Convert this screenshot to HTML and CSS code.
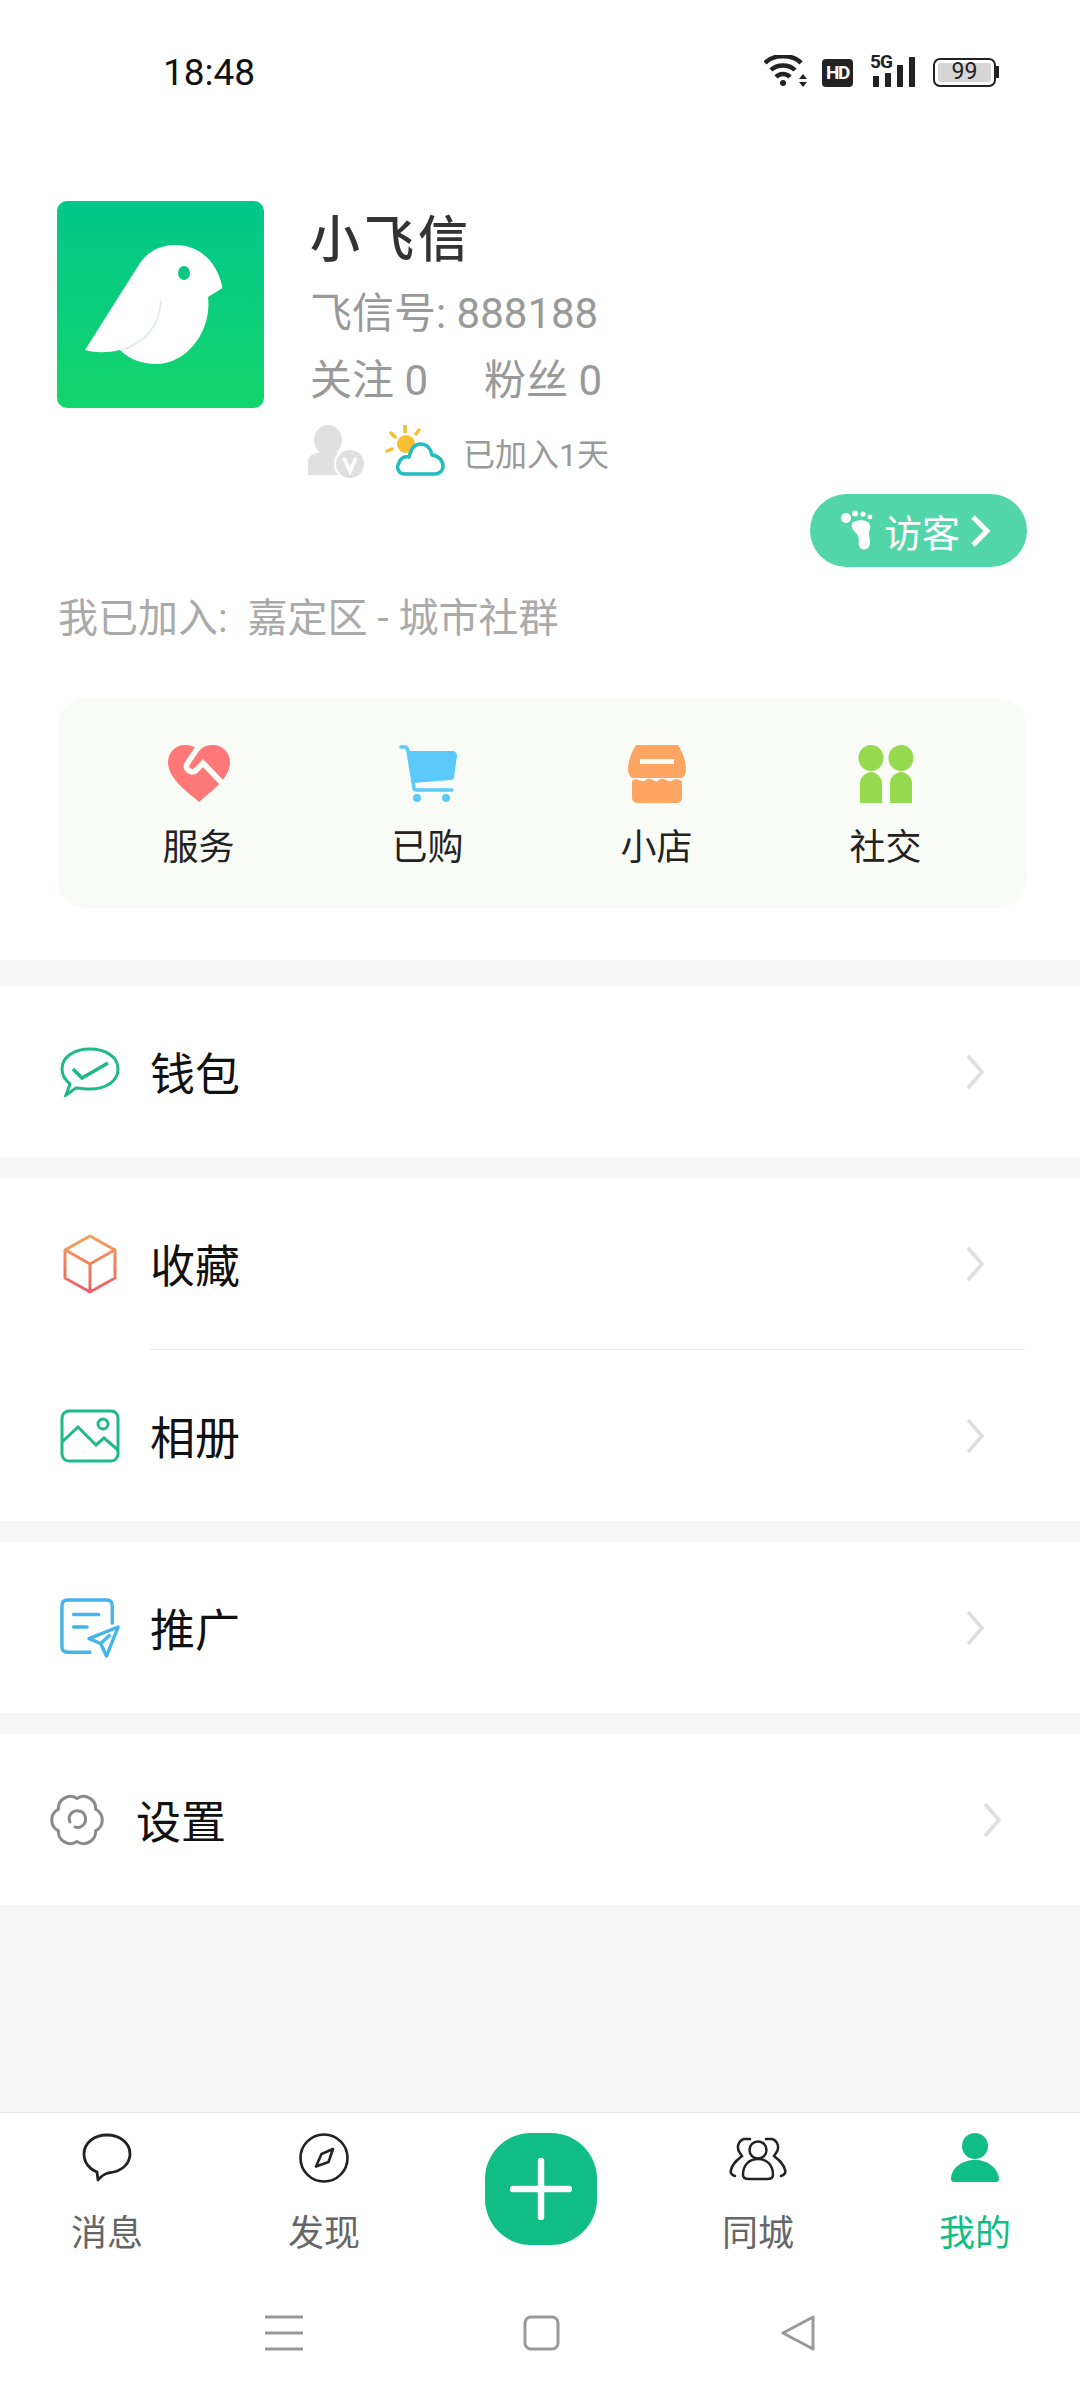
FILE: index.html
```html
<!DOCTYPE html>
<html lang="zh-CN">
<head>
  <meta charset="UTF-8">
  <title>我的</title>
  <link rel="stylesheet" href="styles.css">
</head>
<body>
  <div class="phone">

    <div class="statusbar">
      <span class="time">18:48</span>
      <div class="status-icons">
        <svg width="44" height="32" viewBox="0 0 44 32">
          <path d="M1 8 C9 -1 29 -1 37 8" class="wifi-arc"/>
          <path d="M7 15 C13 9 25 9 31 15" class="wifi-arc"/>
          <path d="M12 22 C16 18 22 18 26 22" class="wifi-arc"/>
          <circle cx="19" cy="28" r="3" fill="#222"/>
          <path d="M35 24 L39 19 L43 24 Z M35 27 L43 27 L39 32 Z" fill="#222"/>
        </svg>
        <span class="hd">HD</span>
        <div class="signal">
          <span class="fiveg">5G</span>
          <svg width="46" height="30" viewBox="0 0 46 30">
            <rect x="3" y="19" width="6" height="11" fill="#222"/>
            <rect x="15" y="16" width="6" height="14" fill="#222"/>
            <rect x="27" y="8" width="6" height="22" fill="#222"/>
            <rect x="39" y="0" width="6" height="30" fill="#222"/>
          </svg>
        </div>
        <div class="battery">
          <span class="battery-level">99</span>
        </div>
        <span class="battery-tip"></span>
      </div>
    </div>

    <div class="profile">
      <div class="avatar">
        <svg width="207" height="207" viewBox="0 0 207 207">
          <path d="M28 149 L83 62 C92 49 105 44 119 44 C143 44 161 62 165.5 87 L151 96 C155 130 130 163 99 163 C85 163 72 158 63 149 C50 152 38 152 28 149 Z" fill="#fff"/>
          <path d="M104 100 C102 125 88 142 64 149" fill="none" stroke="#e4ebe8" stroke-width="2"/>
          <ellipse cx="127" cy="72" rx="6" ry="7" fill="#0cc781"/>
        </svg>
      </div>
      <div class="info">
        <div class="name">小飞信</div>
        <div class="account">飞信号: 888188</div>
        <div class="stats"><span class="stat">关注 0</span><span>粉丝 0</span></div>
        <div class="badges">
          <svg width="58" height="54" viewBox="0 0 58 54">
            <ellipse cx="21" cy="15" rx="14" ry="15" fill="#e0e0e0"/>
            <path d="M1 50 L1 36 C1 30 8 28 14 27 L28 27 C34 28 40 30 40 36 L40 50 Z" fill="#e0e0e0"/>
            <circle cx="43" cy="39" r="15" fill="#e0e0e0" stroke="#fff" stroke-width="2"/>
            <path d="M37 33 L43 46 L49 33" fill="none" stroke="#fff" stroke-width="3.5"/>
          </svg>
          <svg class="weather" width="60" height="54" viewBox="0 0 60 54">
            <circle cx="21" cy="19" r="9" fill="#f9bd33"/>
            <path d="M20 1 L20 7 M34 5 L31 9 M6 8 L10 12 M2 26 L7 24" stroke="#f9bd33" stroke-width="3.5" stroke-linecap="round"/>
            <path d="M20 49 C13 49 11 42 14 38 C15 33 20 31 24 32 C26 24 30 19 35 19 C42 19 46 24 47 30 C54 31 58 36 58 41 C58 46 54 49 50 49 Z" fill="#fff" stroke="#1fbcc0" stroke-width="3.5" stroke-linejoin="round"/>
          </svg>
          <span class="joined-days">已加入1天</span>
        </div>
      </div>
    </div>

    <div class="visitor-wrap">
      <div class="visitor">
        <svg width="38" height="42" viewBox="0 0 38 42">
          <circle cx="6" cy="8" r="5" fill="#fff"/>
          <circle cx="15" cy="3.5" r="3" fill="#fff"/>
          <circle cx="23" cy="4" r="2.6" fill="#fff"/>
          <circle cx="30" cy="7" r="2.4" fill="#fff"/>
          <path d="M13 12 C22 8 32 11 30 19 C28 24 30 28 30 33 C30 40 21 42 19 36 C18 31 20 28 17 24 C14 21 9 16 13 12 Z" fill="#fff"/>
        </svg>
        <span class="visitor-text">访客</span>
        <svg width="22" height="34" viewBox="0 0 22 34">
          <path d="M4 3 L18 17 L4 31" fill="none" stroke="#fff" stroke-width="5"/>
        </svg>
      </div>
    </div>

    <div class="community">我已加入:&nbsp;&nbsp;嘉定区 - 城市社群</div>

    <div class="shortcuts">
      <div class="shortcut">
        <svg width="62" height="58" viewBox="0 0 62 58">
          <path d="M31 57 C20 47 0 34 0 17 C0 7 8 0 17 0 C23 0 28 2 31 6 C34 2 39 0 45 0 C54 0 62 7 62 17 C62 34 42 47 31 57 Z" fill="#ff7878"/>
          <path d="M31 1 L19 19 C17 23 20 26 24 27 C27 27 29 25 35 18 L55 39" fill="none" stroke="#fbfcf6" stroke-width="5.5"/>
        </svg>
        <span class="shortcut-label">服务</span>
      </div>
      <div class="shortcut">
        <svg width="58" height="58" viewBox="0 0 58 58">
          <path d="M8 6 L53 6 C56 6 58 8 58 11 L55 32 C55 34 54 35 52 35 L14 38 Z" fill="#5cc9fb"/>
          <path d="M2 2 L6 2 C8 2 8 3 9 6 L15 43 C15 45 16 45 18 45 L53 45" fill="none" stroke="#5cc9fb" stroke-width="3.5" stroke-linecap="round"/>
          <circle cx="18" cy="53" r="4" fill="#5cc9fb"/>
          <circle cx="47" cy="53" r="4" fill="#5cc9fb"/>
        </svg>
        <span class="shortcut-label">已购</span>
      </div>
      <div class="shortcut">
        <svg width="58" height="58" viewBox="0 0 58 58">
          <path d="M8 0 L50 0 C54 6 58 16 58 24 C58 28 56 32 54 33 L4 33 C2 32 0 28 0 24 C0 16 4 6 8 0 Z" fill="#ffa564"/>
          <path d="M4 36 C9 31 13 39 18 35 C23 31 26 39 31 35 C36 31 40 39 45 35 C49 32 52 36 54 36 L54 52 C54 56 52 58 48 58 L10 58 C6 58 4 56 4 52 Z" fill="#ffa564"/>
          <rect x="12" y="14" width="34" height="5" fill="#fbfcf4"/>
        </svg>
        <span class="shortcut-label">小店</span>
      </div>
      <div class="shortcut">
        <svg width="56" height="58" viewBox="0 0 56 58">
          <ellipse cx="13" cy="13" rx="12.5" ry="13" fill="#95d94f"/>
          <ellipse cx="43" cy="13" rx="12.5" ry="13" fill="#95d94f"/>
          <path d="M2 58 L2 38 C2 32 8 27 13 27 C18 27 24 32 24 38 L24 58 Z" fill="#95d94f"/>
          <path d="M32 58 L32 38 C32 32 38 27 43 27 C48 27 54 32 54 38 L54 58 Z" fill="#95d94f"/>
        </svg>
        <span class="shortcut-label">社交</span>
      </div>
    </div>

    <div class="menu-group menu-first">
      <div class="row">
        <svg class="row-icon" width="60" height="50" viewBox="0 0 60 50">
          <path d="M6 48 L10 37 C4 32 2 27 2 22 C2 10 14 2 30 2 C46 2 58 10 58 22 C58 34 46 42 30 42 C24 42 20 41 16 41 Z" fill="none" stroke="#1fb889" stroke-width="3"/>
          <path d="M13 22 L22 31 L48 16" fill="none" stroke="#1fb889" stroke-width="3.5"/>
        </svg>
        <span class="row-title">钱包</span>
        <svg class="chevron" width="20" height="36" viewBox="0 0 20 36">
          <path d="M3 2 L17 18 L3 34" fill="none" stroke="#dedede" stroke-width="3.5"/>
        </svg>
      </div>
    </div>

    <div class="menu-group">
      <div class="row">
        <svg class="row-icon" width="60" height="60" viewBox="0 0 60 60">
          <defs>
            <linearGradient id="boxGrad" x1="0" y1="0" x2="0" y2="1">
              <stop offset="0" stop-color="#f0a254"/>
              <stop offset="1" stop-color="#ee5f6c"/>
            </linearGradient>
          </defs>
          <path d="M30 2 L55 16 L55 44 L30 58 L5 44 L5 16 Z M5.5 16 L30 30 L54.5 16 M30 30 L30 58" fill="none" stroke="url(#boxGrad)" stroke-width="3" stroke-linejoin="round"/>
        </svg>
        <span class="row-title">收藏</span>
        <svg class="chevron" width="20" height="36" viewBox="0 0 20 36">
          <path d="M3 2 L17 18 L3 34" fill="none" stroke="#dedede" stroke-width="3.5"/>
        </svg>
      </div>
      <div class="divider"></div>
      <div class="row">
        <svg class="row-icon" width="60" height="54" viewBox="0 0 60 54">
          <rect x="2" y="2" width="56" height="50" rx="7" fill="none" stroke="#1fb889" stroke-width="3"/>
          <path d="M2 33 L18 18 L36 36 L44 29 L58 41" fill="none" stroke="#1fb889" stroke-width="3"/>
          <circle cx="43" cy="15" r="5" fill="none" stroke="#1fb889" stroke-width="3"/>
        </svg>
        <span class="row-title">相册</span>
        <svg class="chevron" width="20" height="36" viewBox="0 0 20 36">
          <path d="M3 2 L17 18 L3 34" fill="none" stroke="#dedede" stroke-width="3.5"/>
        </svg>
      </div>
    </div>

    <div class="menu-group">
      <div class="row">
        <svg class="row-icon" width="60" height="62" viewBox="0 0 62 62">
          <path d="M31 56 L8 56 C4 56 2 54 2 50 L2 8 C2 4 4 2 8 2 L48 2 C52 2 54 4 54 8 L54 26" fill="none" stroke="#45b4ea" stroke-width="3.5" stroke-linecap="round"/>
          <path d="M14 17 L40 17 M14 30 L28 30" stroke="#45b4ea" stroke-width="3.5" stroke-linecap="round"/>
          <path d="M60 30 L30 42 L42 47 L48 60 Z M42 47 L52 38" fill="none" stroke="#45b4ea" stroke-width="3.5" stroke-linejoin="round"/>
        </svg>
        <span class="row-title">推广</span>
        <svg class="chevron" width="20" height="36" viewBox="0 0 20 36">
          <path d="M3 2 L17 18 L3 34" fill="none" stroke="#dedede" stroke-width="3.5"/>
        </svg>
      </div>
    </div>

    <div class="menu-group">
      <div class="row row-settings">
        <svg class="row-icon" width="54" height="54" viewBox="0 0 54 54">
          <path d="M27 5.5 A12 12 0 0 1 45.6 16.25 A12 12 0 0 1 45.6 37.75 A12 12 0 0 1 27 48.5 A12 12 0 0 1 8.4 37.75 A12 12 0 0 1 8.4 16.25 A12 12 0 0 1 27 5.5 Z" fill="none" stroke="#8a8a8a" stroke-width="3" stroke-linejoin="round"/>
          <path d="M20 29 C17 22 23 17 29 18 C36 19 38 29 32 33 C29 35 27 35 25 34" fill="none" stroke="#8a8a8a" stroke-width="3" stroke-linecap="round"/>
        </svg>
        <span class="row-title">设置</span>
        <svg class="chevron" width="20" height="36" viewBox="0 0 20 36">
          <path d="M3 2 L17 18 L3 34" fill="none" stroke="#dedede" stroke-width="3.5"/>
        </svg>
      </div>
    </div>

    <div class="spacer"></div>

    <div class="tabbar">
      <div class="tab">
        <svg width="50" height="50" viewBox="0 0 50 50">
          <path d="M15 39 C7 36 2 29 2 21 C2 10 12 2 25 2 C38 2 48 10 48 21 C48 32 38 39 26 40 C23 41 20 42 16 47 Z" fill="none" stroke="#222" stroke-width="2.8" stroke-linejoin="round"/>
        </svg>
        <span class="tab-label">消息</span>
      </div>
      <div class="tab">
        <svg width="50" height="50" viewBox="0 0 50 50">
          <circle cx="25" cy="25" r="23.5" fill="none" stroke="#222" stroke-width="2.6"/>
          <path d="M34 16 L22.5 21 L17 33.5 L29.5 29 Z" fill="none" stroke="#222" stroke-width="2.6" stroke-linejoin="round"/>
        </svg>
        <span class="tab-label">发现</span>
      </div>
      <div class="tab">
        <div class="fab">
          <svg width="62" height="62" viewBox="0 0 62 62">
            <path d="M31 3 L31 59 M3 31 L59 31" stroke="#fff" stroke-width="6.5" stroke-linecap="round"/>
          </svg>
        </div>
      </div>
      <div class="tab">
        <svg width="58" height="50" viewBox="0 0 58 50">
          <circle cx="29" cy="17" r="8.5" fill="none" stroke="#222" stroke-width="2.5"/>
          <path d="M14 42 C14 32 20 26 29 26 C38 26 44 32 44 42 C44 45 42 46 38 46 L20 46 C16 46 14 45 14 42 Z" fill="none" stroke="#222" stroke-width="2.5"/>
          <path d="M21 6 L15 6 C9 8 7 15 11 20 L13 23 C8 27 3 31 2 37 C1 40 3 42 6 43" fill="none" stroke="#222" stroke-width="2.5" stroke-linecap="round"/>
          <path d="M37 6 L43 6 C49 8 51 15 47 20 L45 23 C50 27 55 31 56 37 C57 40 55 42 52 43" fill="none" stroke="#222" stroke-width="2.5" stroke-linecap="round"/>
        </svg>
        <span class="tab-label">同城</span>
      </div>
      <div class="tab">
        <svg width="50" height="50" viewBox="0 0 50 50">
          <circle cx="25" cy="13" r="13" fill="#10bd84"/>
          <path d="M1 46 C1 35 12 27 25 27 C38 27 48 35 49 46 C49 48 48 49 46 49 L4 49 C2 49 1 48 1 46 Z" fill="#10bd84"/>
        </svg>
        <span class="tab-label tab-active">我的</span>
      </div>
    </div>

    <div class="navbar">
      <svg width="38" height="36" viewBox="0 0 38 36">
        <path d="M0 2 L38 2 M0 18 L38 18 M0 34 L38 34" stroke="#999" stroke-width="3"/>
      </svg>
      <svg width="37" height="36" viewBox="0 0 37 36">
        <rect x="2" y="2" width="33" height="32" rx="6" fill="none" stroke="#999" stroke-width="3"/>
      </svg>
      <svg width="36" height="36" viewBox="0 0 36 36">
        <path d="M33 2 L33 34 L3 18 Z" fill="none" stroke="#999" stroke-width="3" stroke-linejoin="round"/>
      </svg>
    </div>

  </div>
</body>
</html>
```

FILE: styles.css
```css
* {
  box-sizing: border-box;
}

html, body {
  margin: 0;
  padding: 0;
}

body {
  font-family: Roboto, "Noto Sans CJK SC", sans-serif;
  background-color: #fff;
}

svg {
  display: block;
  flex-shrink: 0;
}

.phone {
  width: 1080px;
  height: 2400px;
  display: flex;
  flex-direction: column;
  overflow: hidden;
}

/* status bar */
.statusbar {
  height: 144px;
  padding: 52px 81px 0 163px;
  display: flex;
  justify-content: space-between;
  align-items: flex-start;
}

.time {
  font-size: 37px;
  line-height: 42px;
  color: #111;
}

.status-icons {
  height: 35px;
  display: flex;
  align-items: flex-end;
}

.wifi-arc {
  fill: none;
  stroke: #222;
  stroke-width: 4.5;
}

.hd {
  width: 31px;
  height: 28px;
  margin-left: 14px;
  background-color: #222;
  border-radius: 4px;
  color: #fff;
  font-size: 19px;
  font-weight: 700;
  line-height: 28px;
  text-align: center;
  letter-spacing: -1.5px;
}

.signal {
  position: relative;
  width: 46px;
  height: 32px;
  margin-left: 17px;
  display: flex;
  align-items: flex-end;
}

.fiveg {
  position: absolute;
  left: 0;
  top: -2px;
  font-size: 19px;
  font-weight: 700;
  line-height: 18px;
  color: #222;
  letter-spacing: -1px;
}

.battery {
  width: 63px;
  height: 29px;
  margin-left: 17px;
  padding: 3px;
  border: 2.5px solid #222;
  border-radius: 7px;
  display: flex;
}

.battery-level {
  flex: 1;
  background-color: #d6d6d6;
  border-radius: 2px;
  font-size: 23px;
  line-height: 18px;
  text-align: center;
  color: #222;
}

.battery-tip {
  width: 3px;
  height: 12px;
  margin: 0 0 9px 0;
  background-color: #222;
}

/* profile */
.profile {
  padding: 57px 0 0 57px;
  display: flex;
  gap: 46px;
}

.avatar {
  width: 207px;
  height: 207px;
  border-radius: 10px;
  background: linear-gradient(180deg, #02c78a, #13d56d);
}

.info {
  display: flex;
  flex-direction: column;
}

.name {
  height: 76px;
  font-size: 50px;
  font-weight: 500;
  line-height: 78px;
  color: #333;
  letter-spacing: 4px;
}

.account {
  height: 72px;
  font-size: 42px;
  line-height: 74px;
  color: #999;
}

.stats {
  height: 64px;
  font-size: 42px;
  line-height: 64px;
  color: #999;
}

.stat {
  margin-right: 56px;
}

.badges {
  height: 78px;
  display: flex;
  align-items: center;
  margin-left: -3px;
}

.weather {
  margin-left: 20px;
}

.joined-days {
  margin-left: 18px;
  font-size: 32px;
  color: #999;
}

/* visitor pill */
.visitor-wrap {
  margin-top: 3px;
  padding-right: 53px;
  display: flex;
  justify-content: flex-end;
}

.visitor {
  width: 217px;
  height: 73px;
  padding-left: 30px;
  display: flex;
  align-items: center;
  background-color: #52d6a9;
  border-radius: 37px;
}

.visitor-text {
  margin: 0 9px 0 6px;
  font-size: 38px;
  color: #fff;
}

.community {
  margin: 22px 0 0 58px;
  font-size: 40px;
  line-height: 60px;
  color: #aaa;
}

/* shortcut card */
.shortcuts {
  width: 970px;
  height: 210px;
  margin: 49px 0 52px 57px;
  padding: 47px 27px 0;
  display: grid;
  grid-template-columns: repeat(4, 1fr);
  background-color: #f9fcf6;
  border-radius: 30px;
}

.shortcut {
  display: flex;
  flex-direction: column;
  align-items: center;
}

.shortcut-label {
  margin-top: 20px;
  font-size: 36px;
  line-height: 50px;
  color: #222;
}

/* menu */
.menu-group {
  border-top: 21px solid #f6f6f6;
}

.menu-first {
  border-top-width: 26px;
}

.row {
  height: 171px;
  padding: 0 95px 0 60px;
  display: flex;
  align-items: center;
}

.row-icon {
  margin-right: 30px;
}

.row-title {
  flex: 1;
  font-size: 45px;
  color: #111;
}

.row-settings {
  padding: 0 78px 0 50px;
}

.row-settings .row-icon {
  margin-right: 32px;
}

.divider {
  height: 1px;
  margin: 0 55px 0 150px;
  background-color: #e8e8e8;
}

.spacer {
  flex: 1;
  background-color: #f6f6f6;
}

/* bottom tabs */
.tabbar {
  height: 179px;
  padding: 20px 0 0 2px;
  border-top: 1px solid #e6e6e6;
  display: grid;
  grid-template-columns: repeat(5, 217px);
  justify-content: center;
}

.tab {
  display: flex;
  flex-direction: column;
  align-items: center;
}

.tab-label {
  margin-top: 26px;
  font-size: 36px;
  line-height: 50px;
  color: #666;
}

.tab-active {
  color: #10bd84;
}

.fab {
  width: 112px;
  height: 112px;
  display: flex;
  align-items: center;
  justify-content: center;
  background-color: #10bd84;
  border-radius: 46px;
}

.navbar {
  height: 109px;
  padding: 24px 0 0 265px;
  display: flex;
  gap: 220px;
}
```
